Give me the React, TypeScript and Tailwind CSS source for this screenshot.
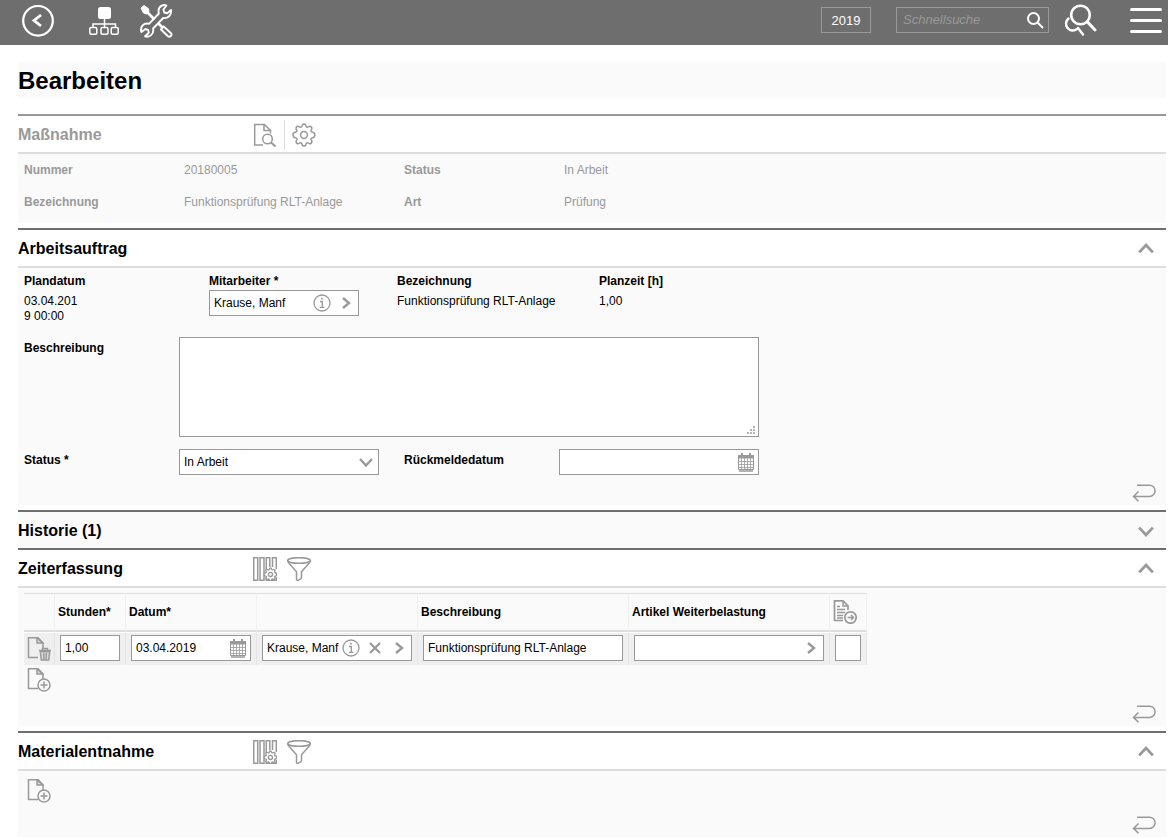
import type {ReactNode} from 'react';

const field = 'h-[26px] border border-[#999] bg-white text-xs text-black';

function DocShape() {
  return (
    <>
      <path d="M11 20.5H1.5V.7h9.500l5 5v6.500" />
      <path d="M10 .7V6h5.500z" fill="#ddd" />
    </>
  );
}

function Icon({label, children}: {label: string; children: ReactNode}) {
  return (
    <button type="button" aria-label={label} className="block size-6 shrink-0">
      <svg viewBox="0 0 24 24" className="size-6" fill="none" stroke="#999" strokeWidth="1.5">
        {children}
      </svg>
    </button>
  );
}

function DocAdd() {
  return (
    <Icon label="Hinzufügen">
      <DocShape />
      <circle cx="17" cy="17" r="6" fill="#fafafa" />
      <path d="M17 13.5v7M13.5 17h7" />
    </Icon>
  );
}

function DocDelete() {
  return (
    <Icon label="Löschen">
      <DocShape />
      <path d="M12 13.5h12M15.5 13v-1.5h5V13" />
      <path d="M13.3 14.5h9.4l-1 8.5h-7.4z" fill="#ddd" />
      <path d="M16.3 15.5l.4 7M19.7 15.5l-.4 7M18 15.5v7" strokeWidth="1" />
    </Icon>
  );
}

const gearPath =
  'M9.9 3.2C10.2 1.5 10.9.9 12 .9s1.8.6 2.1 2.3c.2.9 1.2 1.3 2 .8 1.4-1 2.4-.9 3.2-.1s.9 1.8-.1 3.2c-.5.8-.1 1.8.8 2 1.700.3 2.9 1.2 2.9 2.9s-1.2 2.6-2.9 2.9c-.9.2-1.3 1.2-.8 2 1 1.4.9 2.4.1 3.2s-1.8.9-3.2-.1c-.8-.5-1.8-.1-2 .8-.3 1.7-1 2.3-2.1 2.3s-1.8-.6-2.1-2.3c-.2-.9-1.200-1.300-2-.8-1.400 1-2.400.9-3.200.1s-.9-1.800.1-3.200c.5-.8.1-1.800-.8-2C2.200 14.600 1 13.700 1 12s1.200-2.600 2.900-2.900c.9-.2 1.300-1.200.8-2-1-1.400-.9-2.400-.1-3.200s1.800-.9 3.200.1c.8.5 1.900.1 2.100-.8z';

function Columns() {
  return (
    <Icon label="Spalten">
      <path d="M.7.7h4v22.6h-4zM7 .7h4v22.6H7zM13.3 13V.7h3.500V10M19.500 10V.7h3.800V12M13.300 20v3.300h10V20" />
      <g transform="translate(10.5 10.5) scale(.58)">
        <path d={gearPath} strokeWidth="2.3" fill="white" />
        <circle cx="12" cy="12" r="3.5" strokeWidth="2.3" />
      </g>
    </Icon>
  );
}

function Filter() {
  return (
    <Icon label="Filter">
      <ellipse cx="12" cy="3.5" rx="11.3" ry="2.8" />
      <path d="M.7 3.5c0 1.3.6 2 1.5 2.9l7.3 8.3v7.6c0 1.2 1 1.3 1.9.8l2.2-1.3c.6-.4.9-.8.9-1.5v-5.6l7.300-8.300c.9-.9 1.500-1.600 1.500-2.900" />
    </Icon>
  );
}

function TableIcons() {
  return (
    <div className="flex gap-[10px]">
      <Columns />
      <Filter />
    </div>
  );
}

function Chevron({d, className}: {d: 'up' | 'down' | 'right'; className: string}) {
  const paths = {up: 'M1 10l6-6.5 6 6.5', down: 'M1 4l6 6.5L13 4', right: 'M4 2l6 5-6 5'};
  return (
    <svg viewBox="0 0 14 14" className={className} fill="none" stroke="#999" strokeWidth="2.4">
      <path d={paths[d]} />
    </svg>
  );
}

function Info() {
  return (
    <button type="button" aria-label="Info">
      <svg viewBox="0 0 18 18" className="size-[18px]" fill="none" stroke="#999" strokeWidth="1.3">
        <circle cx="9" cy="9" r="8" />
        <path d="M7 7.5h2.3V13M6.8 13.3h4.6" />
        <path d="M8.2 4.7h1.6" strokeWidth="1.8" />
      </svg>
    </button>
  );
}

function Open() {
  return (
    <button type="button" aria-label="Auswählen">
      <Chevron d="right" className="size-[14px]" />
    </button>
  );
}

function Calendar() {
  return (
    <button type="button" aria-label="Kalender">
      <svg viewBox="0 0 16 19" className="h-[19px] w-4" fill="none" stroke="#999">
        <path d="M.5 2.5h15v14H.5z" />
        <path d="M0 2h16v3.5H0zM3 0h2v3H3zM11 0h2v3h-2z" fill="#999" stroke="none" />
        <path d="M0 8.5h16M0 11.5h16M0 14.5h16M3.500 5v12M6.500 5v12M9.500 5v12M12.500 5v12" strokeWidth=".8" />
        <path d="M1 18h14" strokeWidth="1.5" />
      </svg>
    </button>
  );
}

function ReturnRow({className = 'pt-[13px]'}: {className?: string}) {
  return (
    <div className={`flex justify-end pr-[10px] pb-[3px] ${className}`}>
      <button type="button" aria-label="Zurück nach oben">
        <svg viewBox="0 0 24 18" className="h-[18px] w-6" fill="none" stroke="#999" strokeWidth="1.5">
          <path d="M5 1.2h12.5a5.6 5.6 0 0 1 0 11.2H1.5M6.5 7.5l-5 4.9 5 4.9" />
        </svg>
      </button>
    </div>
  );
}

type SectionProps = {
  title: string;
  icons?: ReactNode;
  state?: 'open' | 'closed';
  muted?: boolean;
  children?: ReactNode;
};

function Section({title, icons, state, muted, children}: SectionProps) {
  return (
    <section className={muted ? 'border-t-2 border-[#999] text-[#999]' : 'border-t-2 border-[#6e6e6e]'}>
      <header className={`flex h-9 items-center pt-[2px] ${state === 'closed' ? 'bg-[#fafafa]' : ''}`}>
        <h2 className="w-[235px] text-base leading-5 font-bold">{title}</h2>
        {icons}
        {state && (
          <button
            type="button"
            aria-label={`${title} ${state === 'open' ? 'zuklappen' : 'aufklappen'}`}
            className="mr-3 ml-auto"
          >
            <Chevron d={state === 'open' ? 'up' : 'down'} className="size-4" />
          </button>
        )}
      </header>
      {children && <div className="mb-[5px] border-t-2 border-[#ddd] bg-[#fafafa] text-xs">{children}</div>}
    </section>
  );
}

function TopBar() {
  return (
    <header className="flex h-[45px] items-start bg-[#6e6e6e] pr-[6px] pl-[22px] text-white">
      <button type="button" aria-label="Zurück" className="mt-[5px]">
        <svg viewBox="0 0 32 32" className="size-8" fill="none" stroke="white">
          <circle cx="16" cy="15.8" r="14.8" strokeWidth="2.2" />
          <path d="M19 10l-7 5.5 7 5.5" strokeWidth="2.8" />
        </svg>
      </button>
      <button type="button" aria-label="Struktur" className="mt-[7px] ml-[35px]">
        <svg viewBox="0 0 30 28" className="h-7 w-[30px]" fill="none" stroke="white" strokeWidth="1.5">
          <rect x="9" y="0" width="13" height="12" rx="2.5" fill="white" stroke="none" />
          <path d="M15.5 12v8M4 20.5V17h22.5v3.5" />
          <rect x=".8" y="20.5" width="7" height="6.7" rx="1.5" />
          <rect x="12" y="20.5" width="7" height="6.7" rx="1.5" />
          <rect x="22.2" y="20.5" width="7" height="6.7" rx="1.5" />
        </svg>
      </button>
      <button type="button" aria-label="Werkzeuge" className="mt-1 ml-5">
        <svg viewBox="0 0 34 34" className="size-[34px]" fill="none" stroke="white" strokeWidth="1.9" strokeLinejoin="round">
          <path d="M2 4l3-2.5 4.5 3.2.5 3.3-2.5 2-3-1z" fill="white" strokeWidth="1" />
          <path d="M8 8l7.5 7.5" strokeWidth="2.6" />
          <path d="M19 19l5 5" strokeWidth="2.6" />
          <path d="M22 25.5l2.7-3 7.3 6.7c1.6 1.8-1 4.600-3 3z" />
          <path d="M27.5 1.5c-3-1.3-8 .5-8 5.5 0 1.2.1 1.8.4 2.5L10 19.8c-3.200-1.200-8.400 1-8 6.700l.4 1.500 4-3 2.700.9.7 2.900-3.700 3.500c4.300 1.500 9.100-2 8-7.800L24.300 14c4.500.8 8.500-2.800 7.700-8l-3.800 3.200-3-.7-.8-3z" />
        </svg>
      </button>
      <button type="button" className="mt-[7px] ml-auto h-[26px] w-[50px] border border-[#999] text-[13px]">
        2019
      </button>
      <div className="mt-[7px] ml-[25px] flex h-[26px] w-[153px] items-center border border-[#999] pr-1 pl-[6px]">
        <input
          type="text"
          aria-label="Schnellsuche"
          placeholder="Schnellsuche"
          className="mb-[2px] min-w-0 flex-1 bg-transparent text-[13px] italic outline-none placeholder:text-[#999]"
        />
        <button type="button" aria-label="Suchen">
          <svg viewBox="0 0 18 18" className="size-[18px]" fill="none" stroke="white" strokeWidth="2">
            <circle cx="7.5" cy="7.5" r="5.5" />
            <path d="M11.5 11.5l5.5 5.5" />
          </svg>
        </button>
      </div>
      <button type="button" aria-label="Erweiterte Suche" className="mt-1 ml-[15px]">
        <svg viewBox="0 0 33 33" className="size-[33px]" fill="none" stroke="white" strokeLinecap="round">
          <circle cx="16.5" cy="11" r="9.3" strokeWidth="2.6" />
          <path d="M23.5 18l7.5 8" strokeWidth="3" />
          <path d="M4.500 14.500a6.600 6.600 0 1 0 8.500 10.500M14 24l5 6.500" strokeWidth="2.4" />
        </svg>
      </button>
      <button type="button" aria-label="Menü" className="mt-[7px] ml-[33px] flex flex-col gap-2 pt-px">
        <span className="h-[3px] w-8 rounded-full bg-white" />
        <span className="h-[3px] w-8 rounded-full bg-white" />
        <span className="h-[3px] w-8 rounded-full bg-white" />
      </button>
    </header>
  );
}

function MassnahmeIcons() {
  return (
    <div className="flex items-center">
      <Icon label="Vorschau">
        <path d="M10 22H1.7V1.500H11.500L17.500 7.500v3" />
        <path d="M11 1.500v6h6.500" />
        <circle cx="14.500" cy="16" r="4.800" />
        <path d="M18 19.500l4.500 4" strokeWidth="2" />
      </Icon>
      <span className="mx-[7px] h-[30px] w-px bg-[#ddd]" />
      <Icon label="Einstellungen">
        <path d={gearPath} />
        <circle cx="12" cy="12" r="3.4" />
      </Icon>
    </div>
  );
}

const headCell =
  'h-[39px] border-t border-b-2 border-t-[#ddd] border-b-[#ddd] border-r border-r-[#f0f0f0] p-0 pl-[3px] text-left font-bold';
const bodyCell = 'border-t border-r border-t-white border-r-[#e5e5e5] bg-[#efefef] p-0 px-[5px] pt-[2px] pb-1';

export default function App() {
  return (
    <div className="font-['Liberation_Sans',Arial,sans-serif] leading-[15px] text-black">
      <TopBar />
      <main className="mt-[17px] mr-[2px] ml-[18px]">
        <h1 className="mb-4 flex h-9 items-center bg-[#fafafa] pt-[2px] text-2xl font-bold">Bearbeiten</h1>

        <Section title="Maßnahme" muted icons={<MassnahmeIcons />}>
          <dl className="grid auto-rows-[32px] grid-cols-[160px_220px_160px_1fr] items-center pb-[5px] pl-[6px] leading-[15px]">
            <dt className="font-bold">Nummer</dt>
            <dd>20180005</dd>
            <dt className="font-bold">Status</dt>
            <dd>In Arbeit</dd>
            <dt className="font-bold">Bezeichnung</dt>
            <dd>Funktionsprüfung RLT-Anlage</dd>
            <dt className="font-bold">Art</dt>
            <dd>Prüfung</dd>
          </dl>
        </Section>

        <Section title="Arbeitsauftrag" state="open">
          <div className="grid grid-cols-[185px_188px_202px_1fr] pt-[6px] pl-[6px] leading-[15px]">
            <div>
              <p className="font-bold">Plandatum</p>
              <p className="mt-[5px] w-14 break-all">03.04.2019 00:00</p>
            </div>
            <div>
              <label htmlFor="mitarbeiter" className="block font-bold">
                Mitarbeiter *
              </label>
              <div className={`${field} mt-px flex w-[150px] items-center gap-2 pr-[5px] pl-1`}>
                <input id="mitarbeiter" defaultValue="Krause, Manf" className="min-w-0 flex-1 outline-none" />
                <Info />
                <Open />
              </div>
            </div>
            <div>
              <p className="font-bold">Bezeichnung</p>
              <p className="mt-[5px]">Funktionsprüfung RLT-Anlage</p>
            </div>
            <div>
              <p className="font-bold">Planzeit [h]</p>
              <p className="mt-[5px]">1,00</p>
            </div>
          </div>

          <div className="mt-[13px] grid grid-cols-[155px_225px_155px_1fr] gap-y-3 pl-[6px] leading-[15px]">
            <label htmlFor="beschreibung" className="pt-1 font-bold">
              Beschreibung
            </label>
            <div className="relative col-span-3 h-[100px] w-[580px]">
              <textarea
                id="beschreibung"
                className="block size-full resize-none border border-[#999] bg-white p-1 outline-none"
              />
              <svg viewBox="0 0 8 8" className="pointer-events-none absolute right-1 bottom-[3px] size-2" fill="#b5b5b5">
                <path d="M6 0h2v2H6zM3 3h2v2H3zM6 3h2v2H6zM0 6h2v2H0zM3 6h2v2H3zM6 6h2v2H6z" />
              </svg>
            </div>
            <label htmlFor="status" className="pt-1 font-bold">
              Status *
            </label>
            <div className="relative w-[200px]">
              <select id="status" className={`${field} block w-full appearance-none pl-1 outline-none`}>
                <option>In Arbeit</option>
                <option>Erledigt</option>
              </select>
              <Chevron d="down" className="pointer-events-none absolute top-[6px] right-[6px] size-[14px]" />
            </div>
            <label htmlFor="rueckmeldedatum" className="pt-1 font-bold">
              Rückmeldedatum
            </label>
            <div className={`${field} flex w-[200px] items-center pr-1 pl-1`}>
              <input id="rueckmeldedatum" className="min-w-0 flex-1 outline-none" />
              <Calendar />
            </div>
          </div>
          <ReturnRow className="pt-[9px]" />
        </Section>

        <Section title="Historie (1)" state="closed" />

        <Section title="Zeiterfassung" state="open" icons={<TableIcons />}>
          <div className="pt-[5px] pl-[6px]">
            <table className="w-[843px] table-fixed border-separate border-spacing-0">
              <colgroup>
                <col className="w-[31px]" />
                <col className="w-[71px]" />
                <col className="w-[131px]" />
                <col className="w-[161px]" />
                <col className="w-[211px]" />
                <col className="w-[201px]" />
                <col className="w-[37px]" />
              </colgroup>
              <thead>
                <tr>
                  <th className={headCell} />
                  <th className={headCell}>Stunden*</th>
                  <th className={headCell}>Datum*</th>
                  <th className={headCell} />
                  <th className={headCell}>Beschreibung</th>
                  <th className={headCell}>Artikel Weiterbelastung</th>
                  <th className={headCell}>
                    <Icon label="Weiterbelasten">
                      <path d="M10 20.5H1.5V.8H10l5 5V10" strokeWidth="1.7" />
                      <path d="M10 .8V6h5M4 6.5h3M4 9.5h8M4 12.5h8M4 15.5h6M4 18h6" />
                      <circle cx="17.5" cy="17.5" r="5.7" fill="#fafafa" strokeWidth="1.7" />
                      <path d="M14.5 17.5H20M18 15l2.5 2.5L18 20" />
                    </Icon>
                  </th>
                </tr>
              </thead>
              <tbody>
                <tr>
                  <td className="border-t border-r border-t-white border-r-[#e5e5e5] bg-[#efefef] p-0 pl-[3px]">
                    <DocDelete />
                  </td>
                  <td className={bodyCell}>
                    <input aria-label="Stunden" defaultValue="1,00" className={`${field} block w-full px-1 outline-none`} />
                  </td>
                  <td className={bodyCell}>
                    <div className={`${field} flex items-center pr-1 pl-1`}>
                      <input aria-label="Datum" defaultValue="03.04.2019" className="min-w-0 flex-1 outline-none" />
                      <Calendar />
                    </div>
                  </td>
                  <td className={bodyCell}>
                    <div className={`${field} flex items-center pr-[5px] pl-1`}>
                      <input aria-label="Mitarbeiter" defaultValue="Krause, Manf" className="min-w-0 flex-1 outline-none" />
                      <Info />
                      <button type="button" aria-label="Leeren" className="mr-[10px] ml-2">
                        <svg viewBox="0 0 14 14" className="size-[14px]" fill="none" stroke="#999" strokeWidth="2.2">
                          <path d="M2 2l10 10M12 2L2 12" />
                        </svg>
                      </button>
                      <Open />
                    </div>
                  </td>
                  <td className={bodyCell}>
                    <input
                      aria-label="Beschreibung"
                      defaultValue="Funktionsprüfung RLT-Anlage"
                      className={`${field} block w-full px-1 outline-none`}
                    />
                  </td>
                  <td className={bodyCell}>
                    <div className={`${field} flex items-center pr-[5px] pl-1`}>
                      <input aria-label="Artikel Weiterbelastung" className="min-w-0 flex-1 outline-none" />
                      <Open />
                    </div>
                  </td>
                  <td className={bodyCell}>
                    <input
                      type="checkbox"
                      aria-label="Weiterbelasten"
                      className="block size-[26px] appearance-none border border-[#999] bg-white"
                    />
                  </td>
                </tr>
              </tbody>
            </table>
            <div className="pt-[3px] pl-[3px]">
              <DocAdd />
            </div>
          </div>
          <ReturnRow />
        </Section>

        <Section title="Materialentnahme" state="open" icons={<TableIcons />}>
          <div className="pt-2 pl-[9px]">
            <DocAdd />
          </div>
          <ReturnRow />
        </Section>
      </main>
    </div>
  );
}
